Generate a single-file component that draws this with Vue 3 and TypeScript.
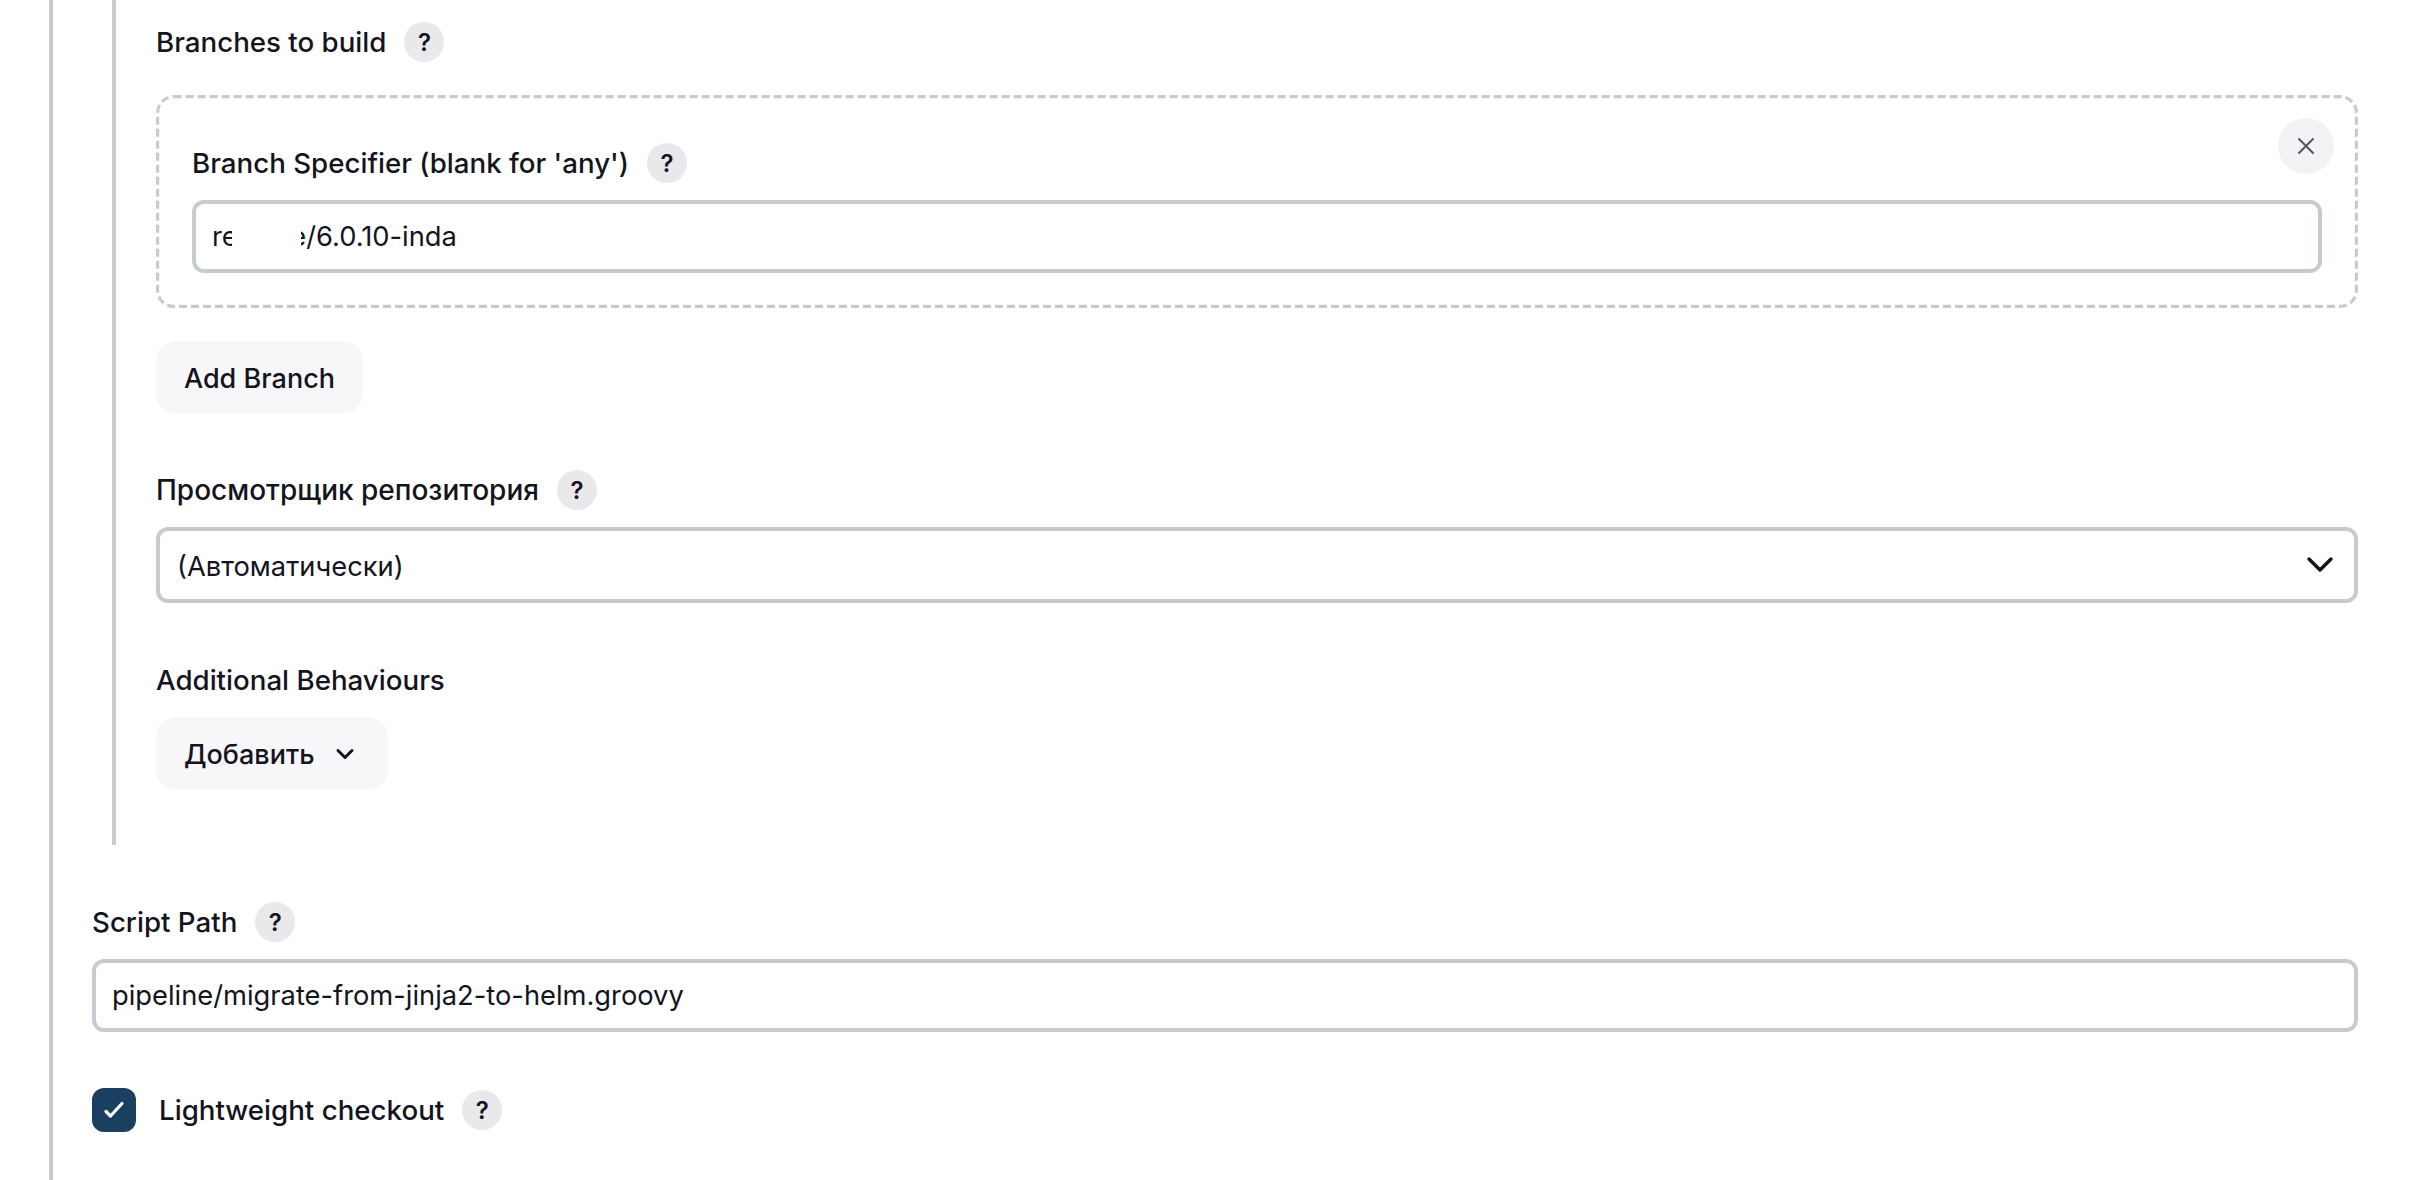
<script setup lang="ts">
import { ref } from 'vue'

const branch = ref('release/6.0.10-inda')
const viewer = ref('auto')
const scriptPath = ref('pipeline/migrate-from-jinja2-to-helm.groovy')
const lightweight = ref(true)
</script>

<template>
  <main class="page">
    <section class="scm">
      <div class="label-row">
        <span class="label">Branches to build</span>
        <button type="button" class="help">?</button>
      </div>

      <div class="repeated">
        <svg class="dashes" width="100%" height="100%"><rect /></svg>
        <button type="button" class="close" aria-label="Remove">
          <svg width="18" height="18" viewBox="0 0 18 18">
            <path d="M1.5 1.5 16.5 16.5M16.5 1.5 1.5 16.5" />
          </svg>
        </button>
        <div class="label-row">
          <span class="label">Branch Specifier (blank for 'any')</span>
          <button type="button" class="help">?</button>
        </div>
        <div class="masked">
          <input v-model="branch" class="field" type="text" />
          <span class="mask"></span>
        </div>
      </div>

      <button type="button" class="btn add-branch">Add Branch</button>

      <div class="label-row viewer">
        <span class="label cyrillic">Просмотрщик репозитория</span>
        <button type="button" class="help">?</button>
      </div>
      <div class="select-wrap">
        <select v-model="viewer" class="field select">
          <option value="auto">(Автоматически)</option>
        </select>
        <svg class="select-arrow" width="28" height="18" viewBox="0 0 28 18">
          <path d="M3 3 14 14 25 3" />
        </svg>
      </div>

      <div class="label-row viewer">
        <span class="label">Additional Behaviours</span>
      </div>
      <button type="button" class="btn add-behaviour">
        Добавить
        <svg width="22" height="14" viewBox="0 0 22 14">
          <path d="M4 3.5 11 10.5 18 3.5" />
        </svg>
      </button>
    </section>

    <div class="label-row script-label">
      <span class="label">Script Path</span>
      <button type="button" class="help">?</button>
    </div>
    <input v-model="scriptPath" class="field" type="text" />

    <label class="check-row">
      <input v-model="lightweight" class="check-input" type="checkbox" />
      <span class="check-box">
        <svg v-if="lightweight" width="28" height="24" viewBox="0 0 28 24">
          <path d="M6 13.5 10.5 18 22 5.5" />
        </svg>
      </span>
      <span class="label">Lightweight checkout</span>
      <button type="button" class="help">?</button>
    </label>
  </main>
</template>

<style scoped>
.page {
  box-sizing: border-box;
  width: 2309px;
  height: 1180px;
  margin-left: 49px;
  padding-left: 39px;
  border-left: 4px solid #c6cbd0;
  font-family: Inter, "Noto Sans", sans-serif;
  font-size: 27.7px;
  color: #14141f;
}

.scm {
  margin-left: 20px;
  padding: 22px 0 56px 40px;
  border-left: 4px solid #c6cbd0;
}

.label-row {
  display: flex;
  align-items: center;
  gap: 18px;
  height: 40px;
}

.label {
  font-weight: 500;
  line-height: 40px;
}

.cyrillic {
  font-size: 28px;
}

.help {
  width: 40px;
  height: 40px;
  padding: 0;
  border: none;
  border-radius: 50%;
  background: #e9e9ec;
  color: #14141f;
  font: 600 24px Inter, sans-serif;
}

.repeated {
  position: relative;
  margin-top: 33px;
  padding: 48px 36px 35px;
}

.dashes {
  position: absolute;
  top: 0;
  left: 0;
  pointer-events: none;
}

.dashes rect {
  x: 1.6px;
  y: 1.6px;
  width: calc(100% - 3.2px);
  height: calc(100% - 3.2px);
  rx: 16px;
  fill: none;
  stroke: #c6cbd0;
  stroke-width: 3.2;
  stroke-dasharray: 8 4;
}

.close {
  position: absolute;
  top: 23px;
  right: 24px;
  display: flex;
  align-items: center;
  justify-content: center;
  width: 56px;
  height: 56px;
  padding: 0;
  border: none;
  border-radius: 50%;
  background: #f3f3f5;
}

.close path {
  fill: none;
  stroke: #55555e;
  stroke-width: 2;
}

.repeated .label-row {
  margin-bottom: 17px;
}

.masked {
  position: relative;
}

.mask {
  position: absolute;
  top: 14px;
  left: 40px;
  width: 69px;
  height: 44px;
  background: #fff;
}

.field {
  display: block;
  box-sizing: border-box;
  width: 100%;
  height: 73px;
  padding: 0 16px;
  border: 4px solid #c6cbd0;
  border-radius: 12px;
  outline: none;
  background: #fff;
  color: #14141f;
  font: 400 27.3px Inter, sans-serif;
}

.btn {
  display: flex;
  align-items: center;
  height: 72px;
  padding: 2px 28px 0;
  border: none;
  border-radius: 20px;
  background: #f7f7f9;
  color: #14141f;
  font: 500 27px Inter, sans-serif;
}

.add-branch {
  margin-top: 33px;
}

.viewer {
  margin-top: 57px;
  margin-bottom: 17px;
}

.select-wrap {
  position: relative;
}

.select {
  height: 76px;
  appearance: none;
  padding: 2px 0 0 17px;
}

.select-arrow {
  position: absolute;
  top: 29px;
  right: 24px;
}

.select-arrow path {
  fill: none;
  stroke: #14141f;
  stroke-width: 3.5;
  stroke-linecap: round;
  stroke-linejoin: round;
}

.add-behaviour {
  gap: 19px;
  padding-right: 32px;
}

.add-behaviour path {
  fill: none;
  stroke: #14141f;
  stroke-width: 3;
  stroke-linecap: round;
  stroke-linejoin: round;
}

.script-label {
  margin-top: 57px;
  margin-bottom: 17px;
}

.check-row {
  display: flex;
  align-items: center;
  gap: 23px;
  margin-top: 56px;
}

.check-input {
  display: none;
}

.check-box {
  display: flex;
  align-items: center;
  justify-content: center;
  width: 44px;
  height: 44px;
  border-radius: 12px;
  background: #1a3f5f;
}

.check-box path {
  fill: none;
  stroke: #fff;
  stroke-width: 3.2;
  stroke-linecap: round;
  stroke-linejoin: round;
}

.check-row .help {
  margin-left: -5px;
}
</style>

<style>
html,
body {
  margin: 0;
  background: #fff;
  overflow: hidden;
}
</style>
